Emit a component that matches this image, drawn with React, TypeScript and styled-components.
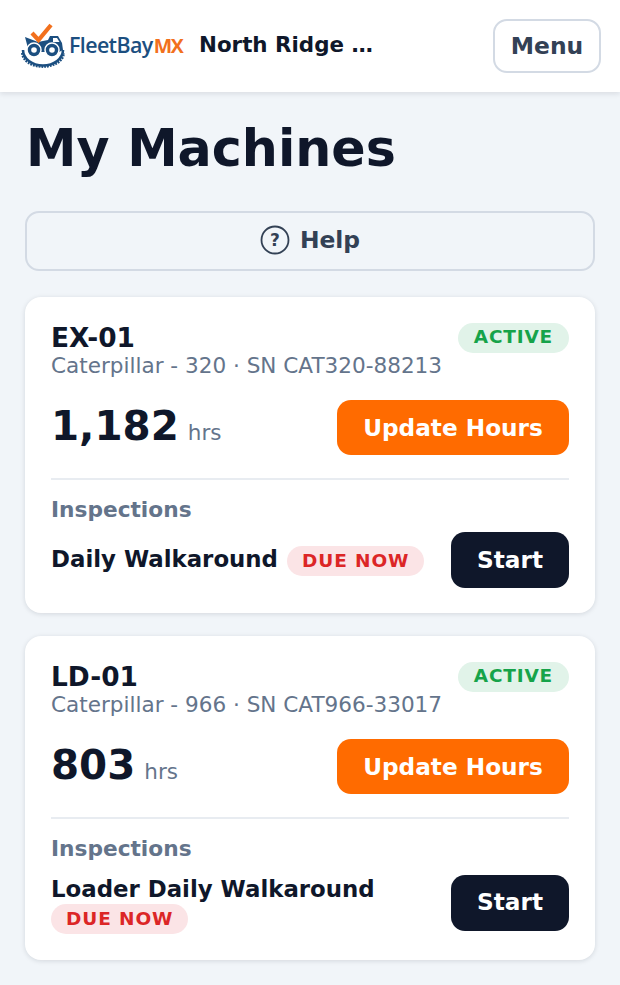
import styled, { createGlobalStyle } from "styled-components";

const GlobalStyle = createGlobalStyle`
  html, body {
    margin: 0;
    padding: 0;
    background: #f1f5f9;
    font-family: "DejaVu Sans", sans-serif;
    color: #0f172a;
  }
  * { box-sizing: border-box; }
`;

const Page = styled.div`
  width: 620px;
  height: 985px;
  overflow: hidden;
`;

const Header = styled.header`
  height: 92px;
  background: #fff;
  box-shadow: 0 2px 5px rgba(15, 23, 42, 0.1);
  display: flex;
  align-items: center;
  padding: 0 19px 0 20px;
`;

const Logo = styled.div`
  display: flex;
  align-items: center;
  width: 179px;
  flex: none;
`;

const LogoText = styled.span`
  font-family: "Open Sans", sans-serif;
  font-weight: 600;
  font-size: 21.4px;
  letter-spacing: -0.6px;
  color: #1c4f80;
  margin-left: 3px;
  margin-top: -4px;
  b {
    font-weight: 700;
    font-size: 19.5px;
    letter-spacing: -1.2px;
    color: #f2701d;
    margin-left: 1px;
  }
`;

const SiteName = styled.div`
  font-weight: 700;
  font-size: 21.4px;
  margin-top: -4px;
  flex: 1;
  color: #0f172a;
`;

const MenuButton = styled.button`
  width: 108px;
  height: 54px;
  border: 2px solid #d3dae4;
  border-radius: 14px;
  background: #fff;
  font: 700 23.4px "DejaVu Sans", sans-serif;
  color: #334155;
  padding: 0;
`;

const Main = styled.main`
  padding: 26px 25px 0;
`;

const Title = styled.h1`
  margin: 0;
  padding-left: 1px;
  font-size: 50.7px;
  line-height: 62px;
  font-weight: 700;
  color: #0f172a;
`;

const HelpButton = styled.button`
  margin-top: 31px;
  width: 100%;
  height: 60px;
  border: 2px solid #d3dae4;
  border-radius: 14px;
  background: transparent;
  display: flex;
  align-items: center;
  justify-content: center;
  gap: 10px;
  font: 700 23.4px "DejaVu Sans", sans-serif;
  color: #334155;
  padding: 0 0 3px;
`;

const Card = styled.section<{ $gap: number }>`
  margin-top: ${({ $gap }) => $gap}px;
  background: #fff;
  border-radius: 16px;
  box-shadow: 0 1px 5px rgba(15, 23, 42, 0.13);
  padding: 26px 26px 25px;
`;

const CardTop = styled.div`
  display: flex;
  justify-content: space-between;
  align-items: flex-start;
`;

const MachineName = styled.div`
  font-size: 26.4px;
  line-height: 29px;
  font-weight: 700;
`;

const MachineInfo = styled.div`
  font-size: 21.55px;
  line-height: 28px;
  color: #64748b;
`;

const ActiveBadge = styled.span`
  height: 30px;
  padding: 0 16px;
  border-radius: 15px;
  background: #e1f3e9;
  color: #16a34a;
  font-size: 18.5px;
  line-height: 28px;
  font-weight: 700;
  letter-spacing: 0.8px;
`;

const HoursRow = styled.div`
  margin-top: 20px;
  display: flex;
  justify-content: space-between;
  align-items: center;
`;

const Hours = styled.div`
  font-size: 40.4px;
  font-weight: 700;
  display: flex;
  align-items: baseline;
  gap: 10px;
  padding-bottom: 3px;
`;

const HoursUnit = styled.span`
  font-size: 21.5px;
  font-weight: 400;
  color: #64748b;
  margin-left: -1px;
`;

const UpdateButton = styled.button`
  width: 232px;
  height: 55px;
  border: none;
  border-radius: 14px;
  background: #ff6b00;
  color: #fff;
  font: 700 23.2px "DejaVu Sans", sans-serif;
  padding: 0;
`;

const Divider = styled.hr`
  margin: 23px 0 0;
  border: none;
  border-top: 2px solid #e8ecf1;
`;

const SectionLabel = styled.div`
  margin-top: 17px;
  font-size: 21.7px;
  line-height: 26px;
  font-weight: 700;
  color: #64748b;
`;

const InspectionRow = styled.div`
  margin-top: 9px;
  display: flex;
  justify-content: space-between;
  align-items: center;
`;

const InspectionInfo = styled.div<{ $stacked?: boolean }>`
  display: flex;
  flex-direction: ${({ $stacked }) => ($stacked ? "column" : "row")};
  align-items: ${({ $stacked }) => ($stacked ? "flex-start" : "center")};
  gap: ${({ $stacked }) => ($stacked ? "0" : "9px")};
  padding-top: ${({ $stacked }) => ($stacked ? "3px" : "0")};
  padding-bottom: ${({ $stacked }) => ($stacked ? "1.4px" : "0")};
`;

const InspectionName = styled.span<{ $stacked?: boolean }>`
  font-size: 22.85px;
  line-height: 30px;
  font-weight: 700;
  margin-bottom: ${({ $stacked }) => ($stacked ? "0" : "2px")};
`;

const DueBadge = styled.span<{ $stacked?: boolean }>`
  height: 30px;
  padding: 0 15px;
  margin-top: ${({ $stacked }) => ($stacked ? "0" : "2px")};
  border-radius: 15px;
  background: #fbe4e6;
  color: #dc2626;
  font-size: 18.5px;
  line-height: 29px;
  font-weight: 700;
  letter-spacing: 0.9px;
`;

const StartButton = styled.button`
  width: 118px;
  height: 56px;
  border: none;
  border-radius: 14px;
  background: #0f172a;
  color: #fff;
  font: 700 23.2px "DejaVu Sans", sans-serif;
  padding: 0 0 2px;
`;

function LogoMark() {
  return (
    <svg width="46" height="46" viewBox="0 0 46 46">
      {/* tyre */}
      <path d="M3 27a20 15.500 0 0 0 40 0" fill="none" stroke="#1c4f80" strokeWidth="2.600" />
      <path d="M2.500 30a20.500 13.500 0 0 0 41 0" fill="none" stroke="#1c4f80" strokeWidth="2.800" strokeDasharray="1.800 1" />
      {/* truck */}
      <path d="M5 14l13 5 10-2 2-4h8l4 7 1 7-4 2H9z" fill="#1c4f80" />
      <path d="M33 15h4l2.500 4H33z" fill="#fff" />
      <circle cx="14" cy="27" r="7" fill="#1c4f80" stroke="#fff" strokeWidth="1.500" />
      <circle cx="14" cy="27" r="2.800" fill="#fff" />
      <circle cx="32" cy="27" r="7" fill="#1c4f80" stroke="#fff" strokeWidth="1.500" />
      <circle cx="32" cy="27" r="2.800" fill="#fff" />
      {/* check */}
      <path d="M12 10l6.500 7L31 2" fill="none" stroke="#f2701d" strokeWidth="4.200" />
    </svg>
  );
}

function HelpIcon() {
  return (
    <svg width="30" height="30" viewBox="0 0 30 30">
      <circle cx="15" cy="15" r="13.5" fill="none" stroke="#334155" strokeWidth="1.8" />
      <text x="15" y="21" textAnchor="middle" fontSize="17" fontWeight="700" fontFamily="DejaVu Sans" fill="#334155">
        ?
      </text>
    </svg>
  );
}

export default function App() {
  return (
    <Page>
      <GlobalStyle />
      <Header>
        <Logo>
          <LogoMark />
          <LogoText>
            FleetBay<b>MX</b>
          </LogoText>
        </Logo>
        <SiteName>North Ridge …</SiteName>
        <MenuButton>Menu</MenuButton>
      </Header>
      <Main>
        <Title>My Machines</Title>
        <HelpButton>
          <HelpIcon />
          Help
        </HelpButton>

        <Card $gap={26}>
          <CardTop>
            <div>
              <MachineName>EX-01</MachineName>
              <MachineInfo>Caterpillar - 320 · SN CAT320-88213</MachineInfo>
            </div>
            <ActiveBadge>ACTIVE</ActiveBadge>
          </CardTop>
          <HoursRow>
            <Hours>
              1,182 <HoursUnit>hrs</HoursUnit>
            </Hours>
            <UpdateButton>Update Hours</UpdateButton>
          </HoursRow>
          <Divider />
          <SectionLabel>Inspections</SectionLabel>
          <InspectionRow>
            <InspectionInfo>
              <InspectionName>Daily Walkaround</InspectionName>
              <DueBadge>DUE NOW</DueBadge>
            </InspectionInfo>
            <StartButton>Start</StartButton>
          </InspectionRow>
        </Card>

        <Card $gap={22.6}>
          <CardTop>
            <div>
              <MachineName>LD-01</MachineName>
              <MachineInfo>Caterpillar - 966 · SN CAT966-33017</MachineInfo>
            </div>
            <ActiveBadge>ACTIVE</ActiveBadge>
          </CardTop>
          <HoursRow>
            <Hours>
              803 <HoursUnit>hrs</HoursUnit>
            </Hours>
            <UpdateButton>Update Hours</UpdateButton>
          </HoursRow>
          <Divider />
          <SectionLabel>Inspections</SectionLabel>
          <InspectionRow>
            <InspectionInfo $stacked>
              <InspectionName $stacked>Loader Daily Walkaround</InspectionName>
              <DueBadge $stacked>DUE NOW</DueBadge>
            </InspectionInfo>
            <StartButton>Start</StartButton>
          </InspectionRow>
        </Card>
      </Main>
    </Page>
  );
}
